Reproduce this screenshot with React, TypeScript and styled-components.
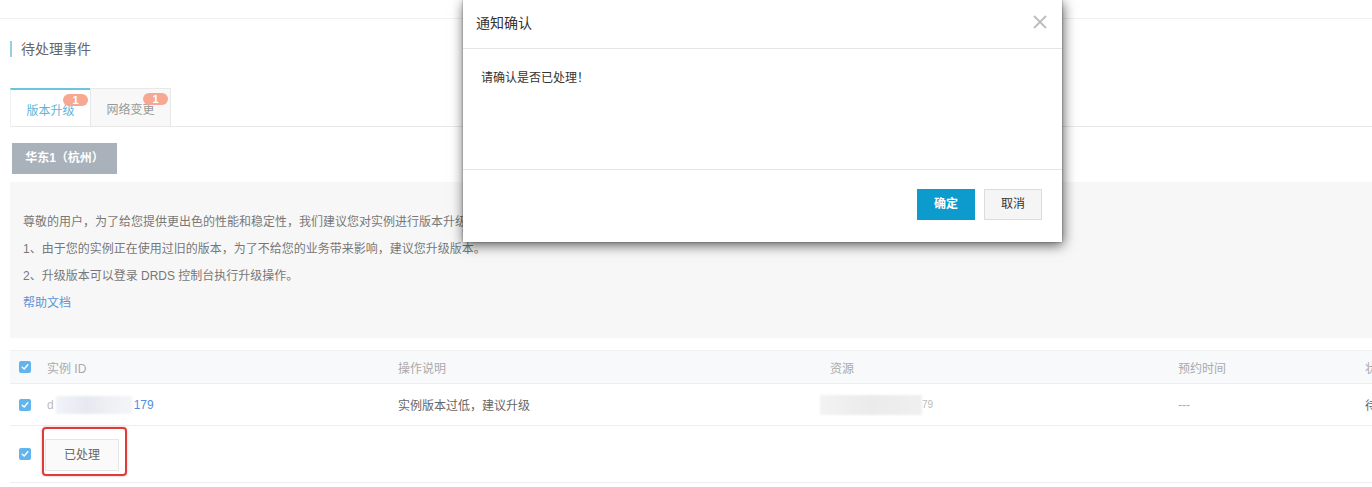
import React from 'react';
import styled, { createGlobalStyle } from 'styled-components';

const GlobalStyle = createGlobalStyle`
body {
  margin: 0;
  background: #ffffff;
  overflow: hidden;
  font-family: "Liberation Sans", "Noto Sans CJK SC", sans-serif;
  font-size: 12px;
  color: #666;
}
`;

const Page = styled.div`
position: relative;
width: 1372px;
height: 487px;
overflow: hidden;
`;

const TopBar = styled.div`
height: 18px;
border-bottom: 1px solid #f0f0f0;
`;

const Content = styled.div`
display: flex;
flex-direction: column;
align-items: flex-start;
padding-left: 10px;
width: 1420px;
`;

const SectionTitle = styled.div`
margin-top: 22px;
height: 16px;
line-height: 16px;
border-left: 2px solid #9ccbe4;
padding-left: 9px;
font-size: 14px;
color: #666;
`;

const TabBar = styled.div`
display: flex;
align-self: stretch;
margin-top: 31px;
border-bottom: 1px solid #e8e8e8;
`;

interface TabProps {
  active?: boolean;
  w: number;
}

const Tab = styled.div<TabProps>`
position: relative;
box-sizing: border-box;
width: ${(p) => p.w}px;
height: 39px;
margin-bottom: -1px;
display: flex;
align-items: center;
justify-content: center;
padding-top: ${(p) => (p.active ? '2px' : '1px')};
border-top: ${(p) => (p.active ? '2px solid #6ec3df' : '1px solid #e8e8e8')};
border-left: 1px solid ${(p) => (p.active ? '#f0f0f0' : '#e8e8e8')};
border-right: ${(p) => (p.active ? 'none' : '1px solid #e8e8e8')};
border-bottom: 1px solid #e8e8e8;
background: ${(p) => (p.active ? '#ffffff' : '#f8f8f8')};
color: ${(p) => (p.active ? '#5eb6d6' : '#999')};
font-size: 12px;
`;

const Badge = styled.span`
position: absolute;
top: 4px;
right: 2px;
width: 25px;
height: 12px;
border-radius: 6px;
background: #f6a893;
color: #fff;
font-size: 11px;
font-weight: bold;
line-height: 12px;
text-align: center;
`;

const RegionButton = styled.div`
margin-top: 16px;
margin-left: 2px;
width: 105px;
height: 31px;
line-height: 31px;
background: #a9b1ba;
color: #fff;
font-weight: bold;
font-size: 12px;
text-align: center;
`;

const Notice = styled.div`
box-sizing: border-box;
margin-top: 8px;
align-self: stretch;
height: 156px;
padding: 27px 13px 0;
background: #f7f7f7;
color: #777;
line-height: 27px;
`;

const HelpLink = styled.a`
color: #5a95d6;
text-decoration: none;
`;

const Table = styled.div`
margin-top: 12px;
align-self: stretch;
border-top: 1px solid #eef0f3;
`;

interface RowProps {
  head?: boolean;
  h: number;
}

const Row = styled.div<RowProps>`
display: grid;
grid-template-columns: 28px 351px 432px 348px 187px 1fr;
align-items: center;
height: ${(p) => p.h}px;
box-sizing: border-box;
background: ${(p) => (p.head ? '#f8f9fb' : '#ffffff')};
border-bottom: 1px solid #eceef1;
color: ${(p) => (p.head ? '#aaa' : '#666')};
`;

const Cell = styled.div`
padding-left: 9px;
white-space: nowrap;
display: flex;
align-items: center;
`;

const MutedCell = styled(Cell)`
color: #aaa;
`;

const CheckBox = styled.span`
display: inline-flex;
align-items: center;
justify-content: center;
width: 12px;
height: 12px;
border-radius: 2px;
background: #62b5ec;
`;

const IdLink = styled.span`
color: #4f8fdc;
display: inline-flex;
align-items: center;
`;

const IdHead = styled.span`
color: #bbb;
`;

const Blur = styled.span<{ w: number }>`
display: inline-block;
width: ${(p) => p.w}px;
height: 18px;
margin: 0 2px;
background: linear-gradient(90deg, #f1f3f8, #e6e9f1 40%, #eef0f4 70%, #f4f5f8);
filter: blur(1px);
`;

const ResourceBlur = styled.span`
display: inline-block;
margin-left: -10px;
width: 102px;
height: 20px;
background: linear-gradient(90deg, #f3f3f3, #ebebeb 50%, #f0f0f0);
filter: blur(1px);
`;

const Faded = styled.span`
color: #bbb;
font-size: 10px;
`;

const Marked = styled.div`
position: relative;
margin-left: -2px;
margin-top: 1px;
`;

const HandledButton = styled.div`
box-sizing: border-box;
width: 74px;
height: 32px;
line-height: 30px;
text-align: center;
border: 1px solid #e6e6e6;
background: #fafafa;
color: #666;
`;

const RedMark = styled.div`
position: absolute;
left: -3px;
top: -12px;
width: 85px;
height: 49px;
box-sizing: border-box;
border: 2px solid #e03a3a;
border-radius: 4px;
box-shadow: 0 0 2px rgba(224, 58, 58, 0.5);
`;

const Modal = styled.div`
position: absolute;
left: 463px;
top: 0;
width: 599px;
height: 242px;
background: #fff;
display: flex;
flex-direction: column;
box-shadow: 1px 3px 12px rgba(0, 0, 0, 0.65), 0 0 2px rgba(0, 0, 0, 0.4);
`;

const ModalHeader = styled.div`
height: 49px;
box-sizing: border-box;
border-bottom: 1px solid #e5e5e5;
padding: 0 15px 5px 13px;
display: flex;
align-items: center;
justify-content: space-between;
`;

const ModalTitle = styled.div`
font-size: 14px;
color: #333;
`;

const ModalBody = styled.div`
height: 121px;
box-sizing: border-box;
border-bottom: 1px solid #e5e5e5;
padding: 19px 18px;
color: #333;
font-size: 12px;
`;

const ModalFooter = styled.div`
flex: 1;
display: flex;
justify-content: flex-end;
align-items: flex-start;
gap: 9px;
padding: 19px 20px 0 0;
`;

interface BtnProps {
  primary?: boolean;
}

const Button = styled.div<BtnProps>`
box-sizing: border-box;
width: 58px;
height: 31px;
line-height: 29px;
text-align: center;
font-size: 12px;
font-weight: ${(p) => (p.primary ? 'bold' : 'normal')};
background: ${(p) => (p.primary ? '#0d9acd' : '#f5f5f5')};
color: ${(p) => (p.primary ? '#fff' : '#333')};
border: 1px solid ${(p) => (p.primary ? '#0d9acd' : '#dcdcdc')};
`;

const Check = () => (
  <CheckBox>
    <svg width="8" height="8" viewBox="0 0 8 8">
      <path d="M1.2 4.2 L3.2 6 L6.8 1.8" stroke="#fff" strokeWidth="1.4" fill="none" strokeLinecap="round" strokeLinejoin="round" />
    </svg>
  </CheckBox>
);

const CloseIcon = () => (
  <svg width="14" height="14" viewBox="0 0 14 14">
    <path d="M1 1 L13 13 M13 1 L1 13" stroke="#bdbdbd" strokeWidth="1.8" />
  </svg>
);

const App = () => {
  return (
    <>
      <GlobalStyle />
      <Page>
        <TopBar />
        <Content>
          <SectionTitle>待处理事件</SectionTitle>
          <TabBar>
            <Tab active w={80}>
              版本升级<Badge>1</Badge>
            </Tab>
            <Tab w={81}>
              网络变更<Badge>1</Badge>
            </Tab>
          </TabBar>
          <RegionButton>华东1（杭州）</RegionButton>
          <Notice>
            <div>尊敬的用户，为了给您提供更出色的性能和稳定性，我们建议您对实例进行版本升级。</div>
            <div>1、由于您的实例正在使用过旧的版本，为了不给您的业务带来影响，建议您升级版本。</div>
            <div>2、升级版本可以登录 DRDS 控制台执行升级操作。</div>
            <HelpLink>帮助文档</HelpLink>
          </Notice>
          <Table>
            <Row head h={33}>
              <Cell><Check /></Cell>
              <Cell>实例 ID</Cell>
              <Cell>操作说明</Cell>
              <Cell>资源</Cell>
              <Cell>预约时间</Cell>
              <Cell>状态</Cell>
            </Row>
            <Row h={42}>
              <Cell><Check /></Cell>
              <Cell>
                <IdLink>
                  <IdHead>d</IdHead>
                  <Blur w={76} />
                  179
                </IdLink>
              </Cell>
              <Cell>实例版本过低，建议升级</Cell>
              <Cell>
                <ResourceBlur />
                <Faded>79</Faded>
              </Cell>
              <MutedCell>---</MutedCell>
              <Cell>待处理</Cell>
            </Row>
            <Row h={57}>
              <Cell><Check /></Cell>
              <Cell>
                <Marked>
                  <HandledButton>已处理</HandledButton>
                  <RedMark />
                </Marked>
              </Cell>
              <Cell />
              <Cell />
              <Cell />
              <Cell />
            </Row>
          </Table>
        </Content>
        <Modal>
          <ModalHeader>
            <ModalTitle>通知确认</ModalTitle>
            <CloseIcon />
          </ModalHeader>
          <ModalBody>请确认是否已处理！</ModalBody>
          <ModalFooter>
            <Button primary>确定</Button>
            <Button>取消</Button>
          </ModalFooter>
        </Modal>
      </Page>
    </>
  );
};

export default App;
